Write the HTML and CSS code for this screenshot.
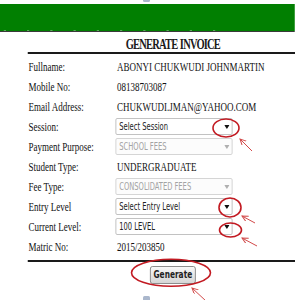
FILE: index.html
```html
<!DOCTYPE html>
<html>
<head>
<meta charset="utf-8">
<link rel="stylesheet" href="styles.css">
</head>
<body>
<div class="page">
  <div class="top"></div>
  <nav class="nav">
    <span class="nav-tick"></span><span class="nav-tick"></span><span class="nav-tick"></span><span class="nav-tick"></span><span class="nav-tick"></span><span class="nav-tick"></span><span class="nav-tick"></span><span class="nav-tick"></span><span class="nav-tick"></span><span class="nav-tick"></span>
  </nav>
  <div class="nav-rule"></div>
  <div class="content">
    <div class="card">
      <h2 class="title">GENERATE INVOICE</h2>
      <div class="rows">
        <div class="row"><span class="label">Fullname:</span><span class="value">ABONYI CHUKWUDI JOHNMARTIN</span></div>
        <div class="row"><span class="label">Mobile No:</span><span class="value">08138703087</span></div>
        <div class="row"><span class="label">Email Address:</span><span class="value">CHUKWUDI.JMAN@YAHOO.COM</span></div>
        <div class="row"><span class="label">Session:</span>
          <div class="select"><span>Select Session</span><svg class="arrow" viewBox="0 0 7 4"><path d="M0 0H7L3.5 4Z"/></svg></div>
        </div>
        <div class="row"><span class="label">Payment Purpose:</span>
          <div class="select disabled"><span>SCHOOL FEES</span><svg class="arrow" viewBox="0 0 7 4"><path d="M0 0H7L3.5 4Z"/></svg></div>
        </div>
        <div class="row"><span class="label">Student Type:</span><span class="value">UNDERGRADUATE</span></div>
        <div class="row"><span class="label">Fee Type:</span>
          <div class="select disabled"><span>CONSOLIDATED FEES</span><svg class="arrow" viewBox="0 0 7 4"><path d="M0 0H7L3.5 4Z"/></svg></div>
        </div>
        <div class="row"><span class="label">Entry Level</span>
          <div class="select"><span>Select Entry Level</span><svg class="arrow" viewBox="0 0 7 4"><path d="M0 0H7L3.5 4Z"/></svg></div>
        </div>
        <div class="row"><span class="label">Current Level:</span>
          <div class="select"><span>100 LEVEL</span><svg class="arrow" viewBox="0 0 7 4"><path d="M0 0H7L3.5 4Z"/></svg></div>
        </div>
        <div class="row"><span class="label">Matric No:</span><span class="value">2015/203850</span></div>
      </div>
      <div class="actions"><button class="btn">Generate</button></div>
    </div>
  </div>
</div>
<svg class="annot" width="295" height="300" viewBox="0 0 295 300">
  <defs>
    <marker id="ah" markerUnits="userSpaceOnUse" markerWidth="8" markerHeight="8" refX="6" refY="3" orient="auto-start-reverse">
      <path d="M0 0L6 3L0 6" fill="none" stroke="#d24a4a" stroke-width="1"/>
    </marker>
  </defs>
  <rect class="frag" x="143" y="-3" width="7" height="5" rx="1.5"/>
  <rect class="frag" x="143" y="296" width="7" height="6" rx="1.5"/>
  <g class="ring">
    <ellipse cx="226" cy="128" rx="13" ry="9"/>
    <ellipse cx="230" cy="207.5" rx="11" ry="9.5"/>
    <ellipse cx="230.5" cy="230" rx="11" ry="7"/>
    <ellipse cx="171" cy="272.7" rx="39.5" ry="13.5"/>
  </g>
  <g class="arrowline">
    <path d="M240 139L252 151" marker-start="url(#ah)"/>
    <path d="M242 216L255 223" marker-start="url(#ah)"/>
    <path d="M242 238L257 246" marker-start="url(#ah)"/>
    <path d="M192 288L206 301" marker-start="url(#ah)"/>
  </g>
</svg>
</body>
</html>
```
FILE: styles.css
```css
html, body {
  margin: 0;
  padding: 0;
  background: #fff;
  overflow: hidden;
}
body {
  width: 295px;
  height: 300px;
  position: relative;
}
.page {
  width: 393px;
  transform: scaleX(0.75);
  transform-origin: 0 0;
  font-family: "Liberation Serif", "Times New Roman", serif;
  color: #111;
}
.top {
  height: 4px;
  background: #fff;
}
.nav {
  height: 27px;
  box-sizing: border-box;
  background: #017f01;
  display: flex;
  align-items: flex-end;
  gap: 28px;
  padding: 0 0 0 5px;
}
.nav-tick {
  width: 3px;
  height: 1px;
  background: #5aa65a;
}
.nav-rule {
  height: 1px;
  background: #3a3a3a;
}
.content {
  padding-left: 37px;
}
.card {
  width: 387px;
}
.title {
  margin: 5px 0 0;
  font: bold 14px/15px "Liberation Serif", "Times New Roman", serif;
  letter-spacing: -1.1px;
  word-spacing: 1px;
  text-align: center;
  color: #1a1a1a;
  border-bottom: 2px solid #1a1a1a;
}
.rows {
  margin-top: 3px;
}
.row {
  display: flex;
  align-items: flex-start;
  height: 20px;
  font-size: 12px;
  line-height: 20px;
}
.label {
  width: 116px;
  padding-left: 1px;
  flex: none;
}
.value {
  padding-left: 2px;
  white-space: nowrap;
}
.select {
  margin-top: 1px;
  width: 156px;
  height: 17px;
  box-sizing: border-box;
  border: 1px solid #b9b9b9;
  border-radius: 2px;
  background: #fff;
  display: flex;
  align-items: center;
  justify-content: space-between;
  padding: 0 3px 0 4px;
  font: 10px/15px "DejaVu Sans Condensed", "DejaVu Sans", sans-serif;
  color: #222;
}
.arrow {
  width: 7px;
  height: 4px;
  fill: #111;
}
.select.disabled {
  color: #a3a3a3;
  border-color: #cfcfcf;
  background: #fcfcfc;
}
.select.disabled .arrow {
  fill: #b0b0b0;
}
.actions {
  margin-top: 3px;
  padding-top: 2px;
  border-top: 2px solid #1a1a1a;
  text-align: center;
}
.btn {
  width: 61px;
  height: 18px;
  padding: 0;
  font: bold 11px/16px "DejaVu Sans Condensed", "DejaVu Sans", sans-serif;
  color: #222;
  background: linear-gradient(#f8f8f8, #d6d6d6);
  border: 1px solid #7d7d7d;
  border-radius: 3px;
}
.annot {
  position: absolute;
  top: 0;
  left: 0;
  pointer-events: none;
}
.frag {
  fill: #aab7cc;
}
.ring ellipse {
  fill: none;
  stroke: #c21a22;
  stroke-width: 1.6;
}
.arrowline path {
  fill: none;
  stroke: #d24a4a;
  stroke-width: 1;
}
```
